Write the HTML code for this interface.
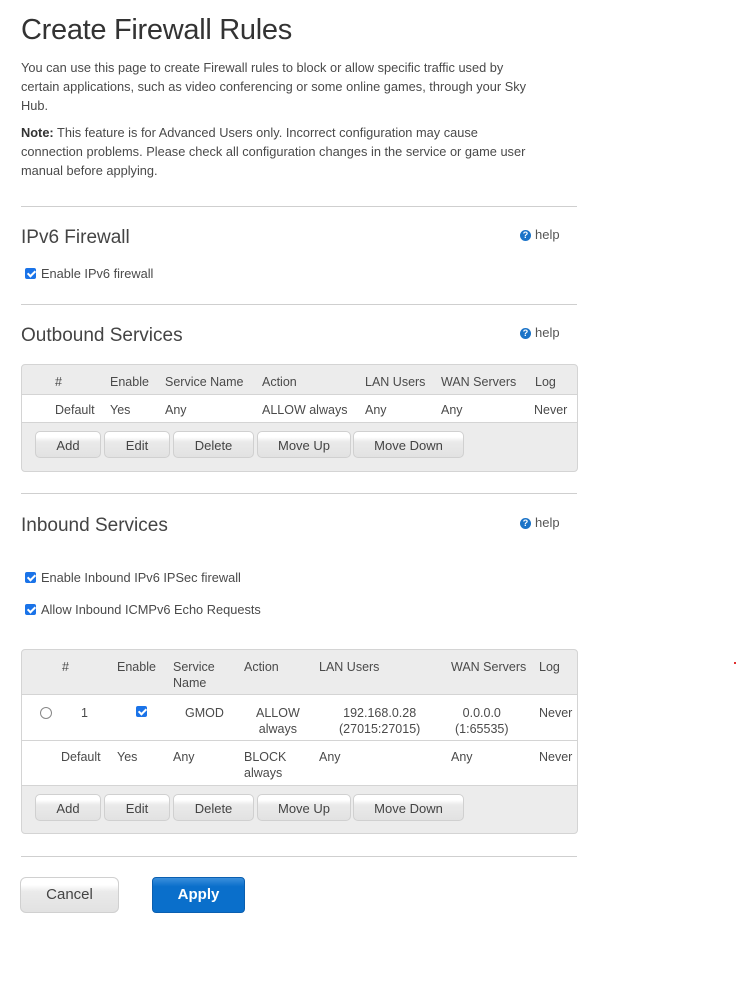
<!DOCTYPE html>
<html><head><meta charset="utf-8"><style>
body{margin:0;width:737px;height:999px;background:#fff;font-family:"Liberation Sans",sans-serif;color:#4a4a4a;position:relative;overflow:hidden}
.a{position:absolute;white-space:nowrap}
.t{font-size:12.8px;line-height:19px}
h1{position:absolute;left:21px;top:14px;margin:0;font-size:29px;font-weight:normal;color:#333;letter-spacing:-0.3px}
.h2{position:absolute;left:21px;font-size:19px;color:#444}
.hr{position:absolute;left:21px;width:556px;height:1px;background:#cfcfcf}
.help{position:absolute;left:520px;font-size:13px;color:#555}
.help i{display:inline-block;width:11px;height:11px;border-radius:50%;background:#1a73c8;color:#fff;font-style:normal;font-size:9px;font-weight:bold;text-align:center;line-height:11px;vertical-align:1px;margin-right:4px}
.cb{position:absolute;width:11px;height:11px;background:#1a73e8;border-radius:2px}
.cb::after{content:"";position:absolute;left:3.5px;top:1px;width:3px;height:6px;border:solid #fff;border-width:0 2px 2px 0;transform:rotate(45deg)}
.box{position:absolute;left:21px;width:555px;border:1px solid #d4d4d4;border-radius:4px;background:#ececec}
.row{position:absolute;left:0;width:555px;background:#fff;border-top:1px solid #d4d4d4;border-bottom:1px solid #d4d4d4}
.btn{position:absolute;height:27px;border:1px solid #d0d0d0;border-radius:5px;background:linear-gradient(#fff 0,#fff 20%,#eaeaea 40%,#e2e2e2);font-size:13px;color:#444;text-align:center;line-height:27px;box-sizing:border-box}
.c{font-size:12.5px;line-height:16px;position:absolute;white-space:nowrap}
</style></head><body>
<h1>Create Firewall Rules</h1>
<div class="a t" style="left:21px;top:58px">You can use this page to create Firewall rules to block or allow specific traffic used by<br>certain applications, such as video conferencing or some online games, through your Sky<br>Hub.</div>
<div class="a t" style="left:21px;top:123px"><b style="color:#333">Note:</b> This feature is for Advanced Users only. Incorrect configuration may cause<br>connection problems. Please check all configuration changes in the service or game user<br>manual before applying.</div>
<div class="hr" style="top:206px"></div>
<div class="h2" style="top:227px">IPv6 Firewall</div>
<div class="help" style="top:227px"><i>?</i>help</div>
<div class="cb" style="left:25px;top:268px"></div>
<div class="a t" style="left:41px;top:264px">Enable IPv6 firewall</div>
<div class="hr" style="top:304px"></div>
<div class="h2" style="top:325px">Outbound Services</div>
<div class="help" style="top:325px"><i>?</i>help</div>
<div class="box" style="top:364px;height:106px">
 <div class="c" style="left:33px;top:9px">#</div><div class="c" style="left:88px;top:9px">Enable</div><div class="c" style="left:143px;top:9px">Service Name</div><div class="c" style="left:240px;top:9px">Action</div><div class="c" style="left:343px;top:9px">LAN Users</div><div class="c" style="left:419px;top:9px">WAN Servers</div><div class="c" style="left:513px;top:9px">Log</div>
 <div class="row" style="top:29px;height:27px">
 <div class="c" style="left:33px;top:7px">Default</div><div class="c" style="left:88px;top:7px">Yes</div><div class="c" style="left:143px;top:7px">Any</div><div class="c" style="left:240px;top:7px">ALLOW always</div><div class="c" style="left:343px;top:7px">Any</div><div class="c" style="left:419px;top:7px">Any</div><div class="c" style="left:512px;top:7px">Never</div></div>
 <div class="btn" style="left:13px;top:66px;width:66px">Add</div><div class="btn" style="left:82px;top:66px;width:66px">Edit</div><div class="btn" style="left:151px;top:66px;width:81px">Delete</div><div class="btn" style="left:235px;top:66px;width:94px">Move Up</div><div class="btn" style="left:331px;top:66px;width:111px">Move Down</div>
</div>
<div class="hr" style="top:493px"></div>
<div class="h2" style="top:515px">Inbound Services</div>
<div class="help" style="top:515px"><i>?</i>help</div>
<div class="cb" style="left:25px;top:572px"></div>
<div class="a t" style="left:41px;top:568px">Enable Inbound IPv6 IPSec firewall</div>
<div class="cb" style="left:25px;top:604px"></div>
<div class="a t" style="left:41px;top:600px">Allow Inbound ICMPv6 Echo Requests</div>
<div class="box" style="top:649px;height:183px">
 <div class="c" style="left:40px;top:9px">#</div><div class="c" style="left:95px;top:9px">Enable</div><div class="c" style="left:151px;top:9px">Service<br>Name</div><div class="c" style="left:222px;top:9px">Action</div><div class="c" style="left:297px;top:9px">LAN Users</div><div class="c" style="left:429px;top:9px">WAN Servers</div><div class="c" style="left:517px;top:9px">Log</div>
 <div class="row" style="top:44px;height:45px">
  <div style="position:absolute;left:18px;top:12px;width:10px;height:10px;border:1px solid #888;border-radius:50%"></div>
  <div class="c" style="left:59px;top:10px">1</div>
  <div class="cb" style="left:114px;top:11px"></div>
  <div class="c" style="left:163px;top:10px">GMOD</div>
  <div class="c" style="left:234px;top:10px;text-align:center">ALLOW<br>always</div>
  <div class="c" style="left:317px;top:10px;text-align:center">192.168.0.28<br>(27015:27015)</div>
  <div class="c" style="left:433px;top:10px;text-align:center">0.0.0.0<br>(1:65535)</div>
  <div class="c" style="left:517px;top:10px">Never</div></div>
 <div class="row" style="top:90px;height:44px;border-top:1px solid #d4d4d4">
  <div class="c" style="left:39px;top:8px">Default</div><div class="c" style="left:95px;top:8px">Yes</div><div class="c" style="left:151px;top:8px">Any</div><div class="c" style="left:222px;top:8px">BLOCK<br>always</div><div class="c" style="left:297px;top:8px">Any</div><div class="c" style="left:429px;top:8px">Any</div><div class="c" style="left:517px;top:8px">Never</div></div>
 <div class="btn" style="left:13px;top:144px;width:66px">Add</div><div class="btn" style="left:82px;top:144px;width:66px">Edit</div><div class="btn" style="left:151px;top:144px;width:81px">Delete</div><div class="btn" style="left:235px;top:144px;width:94px">Move Up</div><div class="btn" style="left:331px;top:144px;width:111px">Move Down</div>
</div>
<div class="hr" style="top:856px"></div>
<div class="btn" style="left:20px;top:877px;width:99px;height:36px;line-height:34px;font-size:15px;border-radius:6px">Cancel</div>
<div class="btn" style="left:152px;top:877px;width:93px;height:36px;line-height:34px;font-size:15px;font-weight:bold;color:#fff;border-color:#0a5fb0;border-radius:4px;background:linear-gradient(#3b8fdc 0,#0a6fcb 25%,#0a6fcb)">Apply</div>
<div style="position:absolute;left:734px;top:662px;width:2px;height:2px;background:#e03030"></div>
</body></html>
